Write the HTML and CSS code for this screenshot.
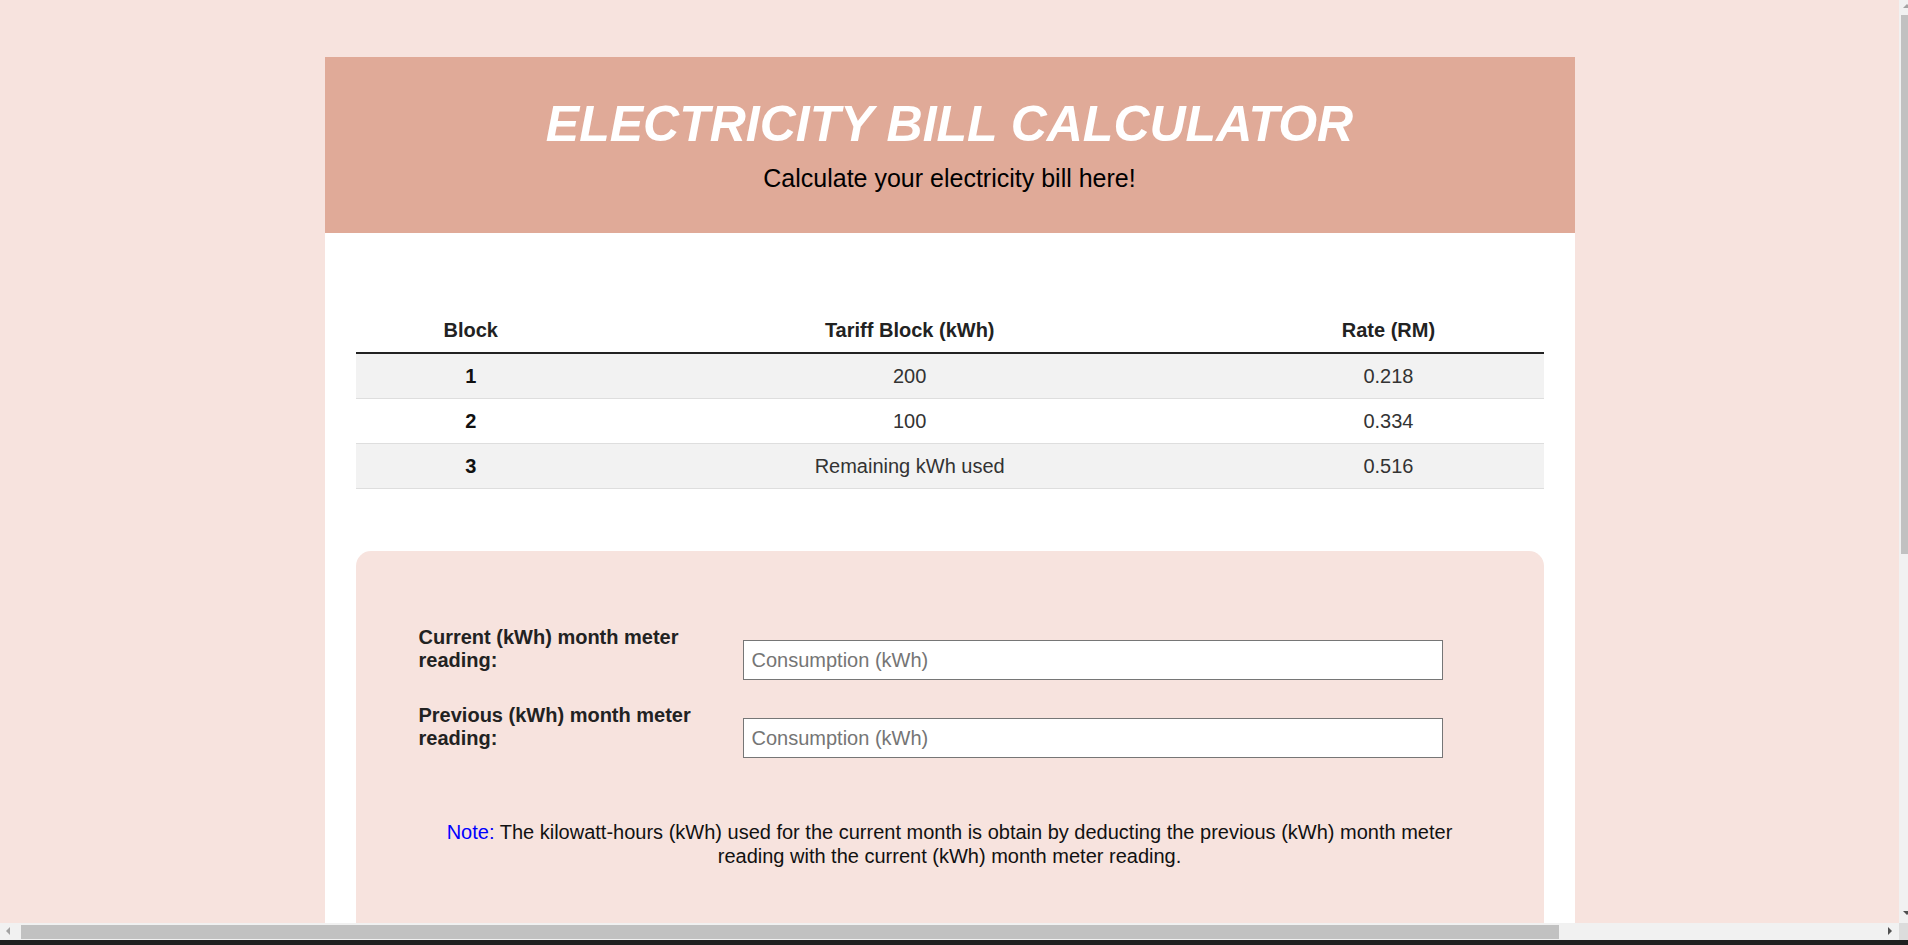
FILE: index.html
```html
<!DOCTYPE html>
<html lang="en">
<head>
<meta charset="utf-8">
<title>Electricity Bill Calculator</title>
<link rel="stylesheet" href="styles.css">
</head>
<body>
<div class="viewport">
  <main class="card">
    <header class="hero">
      <h1 class="hero-title">ELECTRICITY BILL CALCULATOR</h1>
      <p class="hero-sub">Calculate your electricity bill here!</p>
    </header>
    <section class="content">
      <table class="tariff">
        <thead>
          <tr>
            <th class="col-block">Block</th>
            <th class="col-tariff">Tariff Block (kWh)</th>
            <th class="col-rate">Rate (RM)</th>
          </tr>
        </thead>
        <tbody>
          <tr class="striped"><th>1</th><td>200</td><td>0.218</td></tr>
          <tr><th>2</th><td>100</td><td>0.334</td></tr>
          <tr class="striped"><th>3</th><td>Remaining kWh used</td><td>0.516</td></tr>
        </tbody>
      </table>
      <form class="calc">
        <div class="fields">
          <label class="field-label" for="current">Current (kWh) month meter reading:</label>
          <input class="field-input" id="current" type="text" placeholder="Consumption (kWh)">
          <label class="field-label" for="previous">Previous (kWh) month meter reading:</label>
          <input class="field-input" id="previous" type="text" placeholder="Consumption (kWh)">
        </div>
        <p class="note"><span class="note-tag">Note:</span> The kilowatt-hours (kWh) used for the current month is obtain by deducting the previous (kWh) month meter reading with the current (kWh) month meter reading.</p>
      </form>
    </section>
  </main>
</div>

<div class="vscroll">
  <span class="vscroll-up"></span>
  <span class="vscroll-thumb"></span>
  <span class="vscroll-down"></span>
</div>
<div class="hscroll">
  <span class="hscroll-left"></span>
  <span class="hscroll-thumb"></span>
  <span class="hscroll-right"></span>
</div>
<div class="scroll-corner"></div>
<div class="window-edge"></div>
</body>
</html>
```
FILE: styles.css
```css
html, body {
  margin: 0;
  padding: 0;
  overflow: hidden;
  background: #f7e3de;
  font-family: "Liberation Sans", Arial, sans-serif;
  font-size: 20px;
  color: #222;
}

.viewport {
  width: 1899px;
  padding-top: 57px;
  min-height: 1500px;
}

.card {
  width: 1250px;
  margin: 0 auto;
  background: #ffffff;
  min-height: 1400px;
}

.hero {
  background: #e0aa98;
  text-align: center;
  padding: 38px 0 40px;
}

.hero-title {
  margin: 0;
  font-size: 50px;
  font-weight: bold;
  font-style: italic;
  color: #ffffff;
  line-height: normal;
}

.hero-sub {
  margin: 11px 0 0;
  font-size: 25px;
  color: #000;
}

.content {
  padding: 75px 31px 0;
}

.tariff {
  width: 100%;
  border-collapse: collapse;
  text-align: center;
}

.tariff th,
.tariff td {
  padding: 11px 0 10px;
  line-height: 23px;
}

.tariff thead th {
  border-bottom: 2px solid #222;
  color: #222;
}

.tariff tbody th,
.tariff tbody td {
  border-bottom: 1px solid #dedede;
}

.tariff tbody td {
  font-weight: normal;
  color: #333;
}

.tariff tbody th {
  color: #111;
}

.col-block { width: 19.4%; }
.col-tariff { width: 54.5%; }
.col-rate { width: 26.1%; }

.striped {
  background: #f2f2f2;
}

.calc {
  margin-top: 62px;
  background: #f7e3de;
  border-radius: 15px;
  padding: 75px 63px 120px;
}

.fields {
  display: grid;
  grid-template-columns: 324px 700px;
  row-gap: 24px;
  align-items: start;
}

.field-label {
  font-weight: bold;
  color: #222;
  padding-right: 24px;
  line-height: 23px;
}

.field-input {
  box-sizing: border-box;
  width: 700px;
  height: 40px;
  margin-top: 14px;
  padding: 7px 8px;
  border: 1px solid #767676;
  background: #fff;
  font-family: "Liberation Sans", Arial, sans-serif;
  font-size: 20px;
  color: #222;
}

.field-input::placeholder {
  color: #757575;
}

.note {
  margin: 62px 0 0;
  text-align: center;
  line-height: 24px;
  color: #111;
}

.note-tag {
  color: #0000ff;
}

/* simulated browser scrollbars */
.vscroll {
  position: fixed;
  top: 0;
  right: 0;
  width: 9px;
  height: 923px;
  background: #f1f1f1;
}

.vscroll-thumb {
  position: absolute;
  left: 2px;
  right: 0;
  top: 15px;
  height: 539px;
  background: #c1c1c1;
}

.vscroll-up,
.vscroll-down {
  position: absolute;
  left: 4px;
  width: 0;
  height: 0;
  border-left: 4px solid transparent;
  border-right: 4px solid transparent;
}

.vscroll-up {
  top: 4px;
  border-bottom: 4px solid #a3a3a3;
}

.vscroll-down {
  bottom: 8px;
  border-top: 4px solid #505050;
}

.hscroll {
  position: fixed;
  left: 0;
  bottom: 5px;
  width: 1899px;
  height: 17px;
  background: #f1f1f1;
}

.hscroll-thumb {
  position: absolute;
  left: 21px;
  width: 1538px;
  top: 2px;
  bottom: 1px;
  background: #c1c1c1;
}

.hscroll-left,
.hscroll-right {
  position: absolute;
  top: 4px;
  width: 0;
  height: 0;
  border-top: 4px solid transparent;
  border-bottom: 4px solid transparent;
}

.hscroll-left {
  left: 6px;
  border-right: 4px solid #a3a3a3;
}

.hscroll-right {
  right: 7px;
  border-left: 4px solid #505050;
}

.scroll-corner {
  position: fixed;
  right: 0;
  bottom: 5px;
  width: 9px;
  height: 17px;
  background: #dcdcdc;
}

.window-edge {
  position: fixed;
  left: 0;
  right: 0;
  bottom: 0;
  height: 5px;
  background: #202020;
}
```
